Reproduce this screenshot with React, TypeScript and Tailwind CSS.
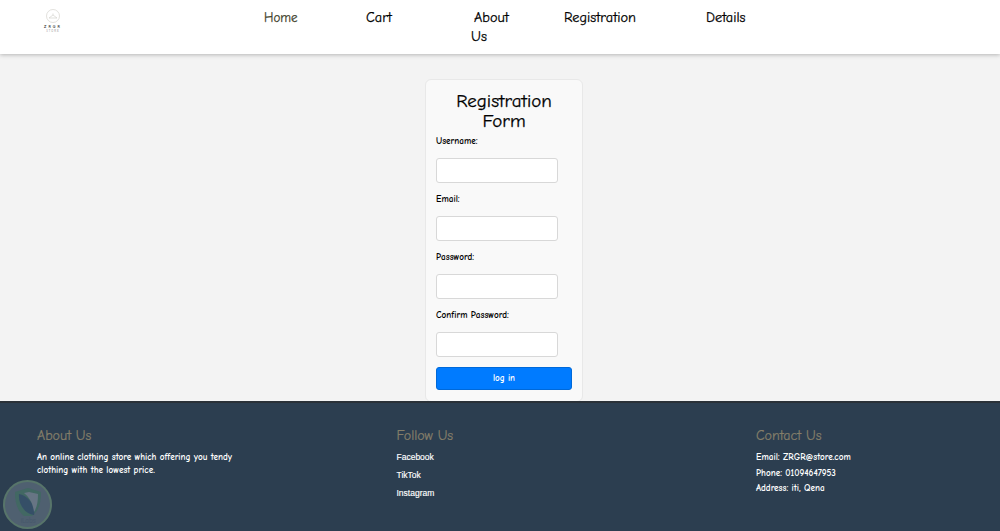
const font = "font-['Comic_Sans_MS','Comic_Neue','Noto_Sans',sans-serif]";

function Logo() {
  return (
    <div className="w-[24px] flex flex-col items-center">
      <svg width="14" height="14" viewBox="0 0 14 14" fill="none" stroke="#cfcdc6" strokeWidth="0.6">
        <circle cx="7" cy="7" r="6.5" />
        <path d="M7 4.5 L7 6 L11 9 L3 9 L7 6" />
      </svg>
      <div className="text-[4px] leading-[4px] mt-[2px] font-bold tracking-[2px] text-[#333] whitespace-nowrap">ZRGR</div>
      <div className="text-[3px] leading-[3px] mt-[1px] tracking-[1px] text-[#777] whitespace-nowrap">STORE</div>
    </div>
  );
}

function Field({ label }: { label: string }) {
  return (
    <div className="flex flex-col mb-[9px]">
      <label className="text-[9.2px] leading-[14px] h-[24px] font-bold text-black">{label}</label>
      <input className="w-[122px] h-[25px] bg-white border border-[#d8d8d8] rounded-[3px]" />
    </div>
  );
}

function Watermark() {
  return (
    <div className="absolute left-[3px] top-[480px] w-[49px] h-[49px] rounded-full bg-[#6d7b8a]/55 border-[2px] border-[#5f8a63]/50 flex items-center justify-center">
      <svg width="36" height="40" viewBox="0 0 36 40" fill="none" opacity="0.8">
        <path d="M18 3 L31 7 C31 18 29 25 22 31 L14 31 C7 25 5 18 5 7 Z" fill="#3f6a60" />
        <path d="M9 9 C18 11 26 20 24 30 C15 29 8 19 9 9 Z" fill="#2f4b66" />
        <path d="M19 7 L28 9 C28 17 27 22 24 27 C23 18 19 12 14 8 Z" fill="#6d7b8a" />
        <text x="18" y="38" textAnchor="middle" fontSize="7" fill="#44566a">iLabs</text>
      </svg>
    </div>
  );
}

export default function App() {
  return (
    <div className={`relative h-[531px] overflow-hidden flex flex-col bg-[#f3f3f3] ${font}`}>
      <header className="h-[54px] shrink-0 bg-white shadow-[0_1px_4px_rgba(0,0,0,0.25)] flex items-start z-10">
        <div className="ml-[41px] mt-[9px] w-[223px]">
          <Logo />
        </div>
        <nav className="flex text-[14.3px] leading-[19px] text-black pt-[8px] [-webkit-text-stroke:0.25px_black]">
          <a className="w-[102px] text-[13px] text-[#3f3f2b] [-webkit-text-stroke:0.25px_#3f3f2b]">Home</a>
          <a className="w-[105px]">Cart</a>
          <a className="w-[93px]"><span className="ml-[3px]">About</span><br />Us</a>
          <a className="w-[142px]">Registration</a>
          <a>Details</a>
        </nav>
      </header>
      <main className="h-[347px] shrink-0 flex justify-center pt-[25px] pl-[8px]">
        <form className="w-[158px] h-[323px] bg-[#f9f9f9] border border-[#e8e8e8] rounded-[6px] px-[10px] pt-[11px]">
          <h2 className="text-[19px] leading-[20px] text-black text-center mb-[3px] px-[15px] [-webkit-text-stroke:0.25px_black]">Registration Form</h2>
          <Field label="Username:" />
          <Field label="Email:" />
          <Field label="Password:" />
          <Field label="Confirm Password:" />
          <button type="button" className="block mt-[10px] w-[136px] h-[23px] bg-[#007bff] rounded-[3px] text-white text-[9px] font-bold border border-[#0069d9]">log in</button>
        </form>
      </main>
      <footer className="flex-1 bg-[#2c3e50] border-t-2 border-[#2a3138] pl-[37px] pt-[24px] grid grid-cols-[359.5px_359.5px_1fr] text-white">
        <div>
          <h3 className="text-[14px] leading-[18px] text-[#857f6a] mb-[6px] [-webkit-text-stroke:0.2px_#857f6a]">About Us</h3>
          <p className="text-[9.2px] leading-[13px] w-[210px] font-bold">An online clothing store which offering you tendy clothing with the lowest price.</p>
        </div>
        <div>
          <h3 className="text-[14px] leading-[18px] text-[#857f6a] mb-[3px] [-webkit-text-stroke:0.2px_#857f6a]">Follow Us</h3>
          <ul className="font-['Liberation_Sans',sans-serif] text-[8.5px] leading-[18px] [-webkit-text-stroke:0.15px_white]">
            <li>Facebook</li>
            <li>TikTok</li>
            <li>Instagram</li>
          </ul>
        </div>
        <div>
          <h3 className="text-[14px] leading-[18px] text-[#857f6a] mb-[5px] [-webkit-text-stroke:0.2px_#857f6a]">Contact Us</h3>
          <p className="text-[9.2px] leading-[15.5px] font-bold">Email: ZRGR@store.com</p>
          <p className="text-[9.2px] leading-[15.5px] font-bold">Phone: 01094647953</p>
          <p className="text-[9.2px] leading-[15.5px] font-bold">Address: iti, Qena</p>
        </div>
      </footer>
      <Watermark />
    </div>
  );
}
